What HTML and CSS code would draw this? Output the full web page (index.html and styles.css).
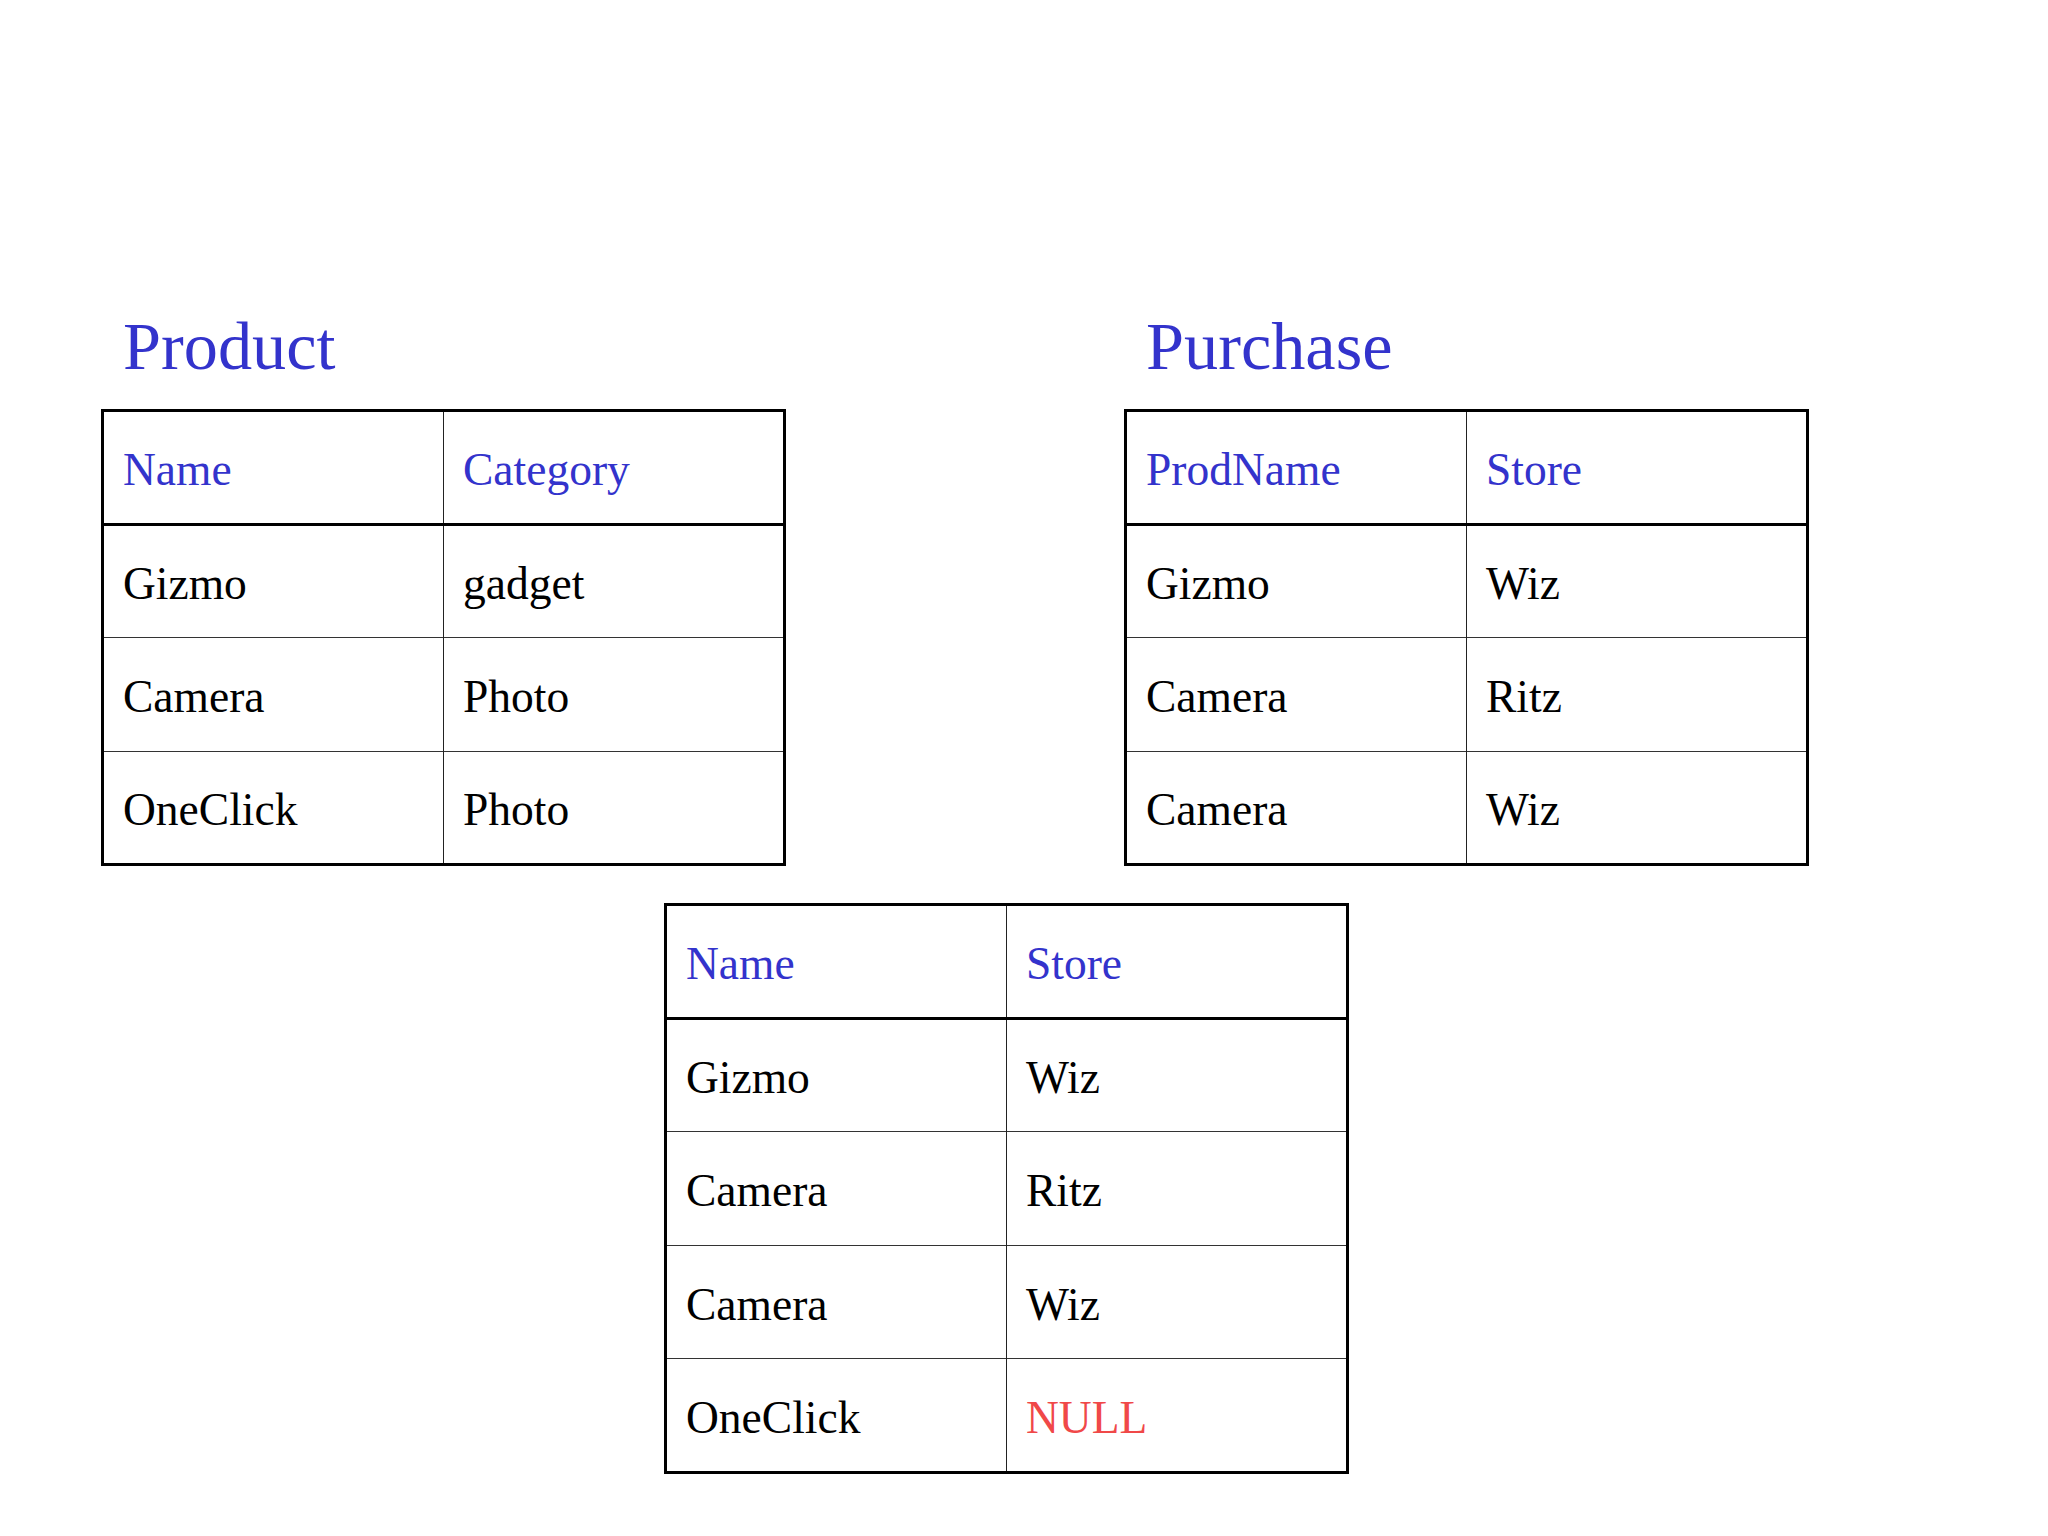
FILE: index.html
```html
<!DOCTYPE html>
<html>
<head>
<meta charset="utf-8">
<link rel="stylesheet" href="styles.css">
</head>
<body>
<div class="page">
  <div class="top">
    <section class="rel">
      <h1 class="title">Product</h1>
      <table class="grid">
        <tr class="head"><td>Name</td><td>Category</td></tr>
        <tr><td>Gizmo</td><td>gadget</td></tr>
        <tr><td>Camera</td><td>Photo</td></tr>
        <tr><td>OneClick</td><td>Photo</td></tr>
      </table>
    </section>
    <section class="rel">
      <h1 class="title">Purchase</h1>
      <table class="grid">
        <tr class="head"><td>ProdName</td><td>Store</td></tr>
        <tr><td>Gizmo</td><td>Wiz</td></tr>
        <tr><td>Camera</td><td>Ritz</td></tr>
        <tr><td>Camera</td><td>Wiz</td></tr>
      </table>
    </section>
  </div>
  <div class="bottom">
    <table class="grid">
      <tr class="head"><td>Name</td><td>Store</td></tr>
      <tr><td>Gizmo</td><td>Wiz</td></tr>
      <tr><td>Camera</td><td>Ritz</td></tr>
      <tr><td>Camera</td><td>Wiz</td></tr>
      <tr><td>OneClick</td><td class="null">NULL</td></tr>
    </table>
  </div>
</div>
</body>
</html>
```

FILE: styles.css
```css
html, body {
  margin: 0;
  padding: 0;
  background: #ffffff;
}
body {
  width: 2048px;
  height: 1536px;
  font-family: "Liberation Serif", "Times New Roman", serif;
  color: #000;
}
.page {
  padding-top: 312px;
}
.top {
  display: flex;
  gap: 338px;
  padding-left: 101px;
}
.title {
  margin: 0 0 29px 22px;
  font-weight: normal;
  font-size: 68.3px;
  line-height: 68px;
  height: 68px;
  color: #3333cc;
}
.grid {
  border-collapse: collapse;
  border: 3px solid #000;
  width: 685px;
  table-layout: fixed;
}
.grid td {
  width: 50%;
  height: 113.5px;
  box-sizing: border-box;
  padding: 5px 0 0 19px;
  font-size: 45.5px;
  line-height: 1;
  vertical-align: middle;
  border-top: 1px solid #333;
  border-left: 1.5px solid #222;
}
.grid td:first-child {
  border-left: 3px solid #000;
}
.grid tr.head td {
  color: #3333cc;
  border-top: 3px solid #000;
}
.grid tr.head + tr td {
  border-top: 3px solid #000;
}
.grid td.null {
  color: #f04848;
}
.bottom {
  margin-top: 37px;
  padding-left: 664px;
}
```
